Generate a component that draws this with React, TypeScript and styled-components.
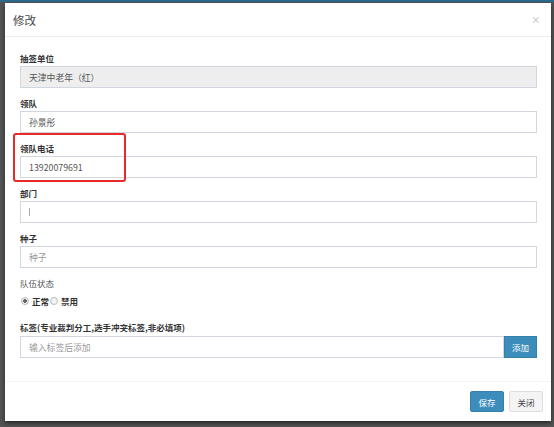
import React from "react";
import styled, { createGlobalStyle } from "styled-components";

const GlobalStyle = createGlobalStyle`
  html, body {
    margin: 0;
    padding: 0;
  }
  body {
    background: #535353;
    font-family: "Noto Sans CJK SC", "Liberation Sans", sans-serif;
  }
`;

const Backdrop = styled.div`
  width: 554px;
  height: 427px;
  box-sizing: border-box;
  border-top: 2px solid #2c6a8c;
  padding: 1px 3px 0 5px;
  background: #535353;
`;

const Modal = styled.div`
  position: relative;
  width: 546px;
  height: 418px;
  background: #fff;
  box-shadow: 0 2px 4px rgba(0, 0, 0, 0.55);
  display: flex;
  flex-direction: column;
`;

const Header = styled.div`
  height: 33px;
  flex: none;
  border-bottom: 1px solid #eeeeee;
  padding: 0 11px 0 8px;
  display: flex;
  align-items: center;
  justify-content: space-between;
`;

const Title = styled.span`
  font-size: 11.5px;
  color: #444;
`;

const Close = styled.span`
  font-family: "Liberation Sans", sans-serif;
  font-size: 14px;
  color: #cfcfcf;
`;

const Body = styled.div`
  flex: 1;
  padding: 14px 14px 0 15px;
`;

const Group = styled.div`
  margin-bottom: 8px;
`;

const Label = styled.label<{ $plain?: boolean }>`
  display: block;
  line-height: 15px;
  font-size: 8.5px;
  font-weight: ${(p) => (p.$plain ? "normal" : "bold")};
  color: ${(p) => (p.$plain ? "#555" : "#333")};
`;

const Input = styled.input`
  display: block;
  width: 100%;
  height: 22px;
  box-sizing: border-box;
  border: 1px solid #d2d6de;
  border-radius: 0;
  padding: 0 8px;
  font-family: inherit;
  font-size: 8.8px;
  color: #555;
  background: #fff;
  outline: none;
  &:disabled {
    background: #eeeeee;
    color: #555;
  }
  &::placeholder {
    color: #9a9a9a;
  }
`;

const Radios = styled.div`
  display: flex;
  align-items: center;
  height: 14px;
  margin: 3px 0 12px;
  padding-left: 1px;
`;

const Radio = styled.span<{ $checked?: boolean }>`
  width: 6px;
  height: 6px;
  border-radius: 50%;
  border: 1px solid #bbb;
  background: ${(p) =>
    p.$checked ? "radial-gradient(circle, #666 0 1.6px, #eee 2px)" : "#f3f3f3"};
  margin-right: 3px;
`;

const RadioText = styled.span`
  font-size: 8.5px;
  font-weight: bold;
  color: #333;
  margin-right: 1px;
`;

const InputRow = styled.div`
  display: flex;
  margin-top: 1px;
`;

const Button = styled.button<{ $variant?: "primary" | "default" }>`
  height: 21px;
  padding: 0;
  font-family: inherit;
  font-size: 8.5px;
  border-radius: ${(p) => (p.$variant ? "2px" : "0")};
  border: 1px solid
    ${(p) => (p.$variant === "default" ? "#dddddd" : "#367fa9")};
  background: ${(p) => (p.$variant === "default" ? "#f4f4f4" : "#3c8dbc")};
  color: ${(p) => (p.$variant === "default" ? "#444" : "#fff")};
`;

const AddButton = styled(Button)`
  width: 33px;
  height: 22px;
  flex: none;
`;

const Footer = styled.div`
  height: 39px;
  flex: none;
  border-top: 1px solid #f4f4f4;
  display: flex;
  align-items: center;
  justify-content: flex-end;
  gap: 5px;
  padding-right: 8px;
`;

const FooterButton = styled(Button)`
  width: 34px;
`;

const Caret = styled.span`
  display: inline-block;
  width: 1px;
  height: 8px;
  background: #aaa;
`;

const FakeInput = styled.div`
  height: 22px;
  box-sizing: border-box;
  border: 1px solid #d2d6de;
  padding: 0 8px;
  display: flex;
  align-items: center;
`;

const Highlight = styled.div`
  position: absolute;
  left: 8px;
  top: 130px;
  width: 113px;
  height: 49px;
  box-sizing: border-box;
  border: 2px solid #e82a2a;
  border-radius: 3px;
  pointer-events: none;
`;

const App: React.FC = () => {
  return (
    <>
      <GlobalStyle />
      <Backdrop>
        <Modal>
          <Header>
            <Title>修改</Title>
            <Close>×</Close>
          </Header>
          <Body>
            <Group>
              <Label>抽签单位</Label>
              <Input disabled defaultValue="天津中老年（红）" />
            </Group>
            <Group>
              <Label>领队</Label>
              <Input defaultValue="孙景彤" />
            </Group>
            <Group>
              <Label>领队电话</Label>
              <Input defaultValue="13920079691" />
            </Group>
            <Group>
              <Label>部门</Label>
              <FakeInput>
                <Caret />
              </FakeInput>
            </Group>
            <Group>
              <Label>种子</Label>
              <Input placeholder="种子" />
            </Group>
            <Label $plain>队伍状态</Label>
            <Radios>
              <Radio $checked />
              <RadioText>正常</RadioText>
              <Radio />
              <RadioText>禁用</RadioText>
            </Radios>
            <Label>标签(专业裁判分工,选手冲突标签,非必填项)</Label>
            <InputRow>
              <Input placeholder="输入标签后添加" />
              <AddButton>添加</AddButton>
            </InputRow>
          </Body>
          <Footer>
            <FooterButton $variant="primary">保存</FooterButton>
            <FooterButton $variant="default">关闭</FooterButton>
          </Footer>
          <Highlight />
        </Modal>
      </Backdrop>
    </>
  );
};

export default App;
